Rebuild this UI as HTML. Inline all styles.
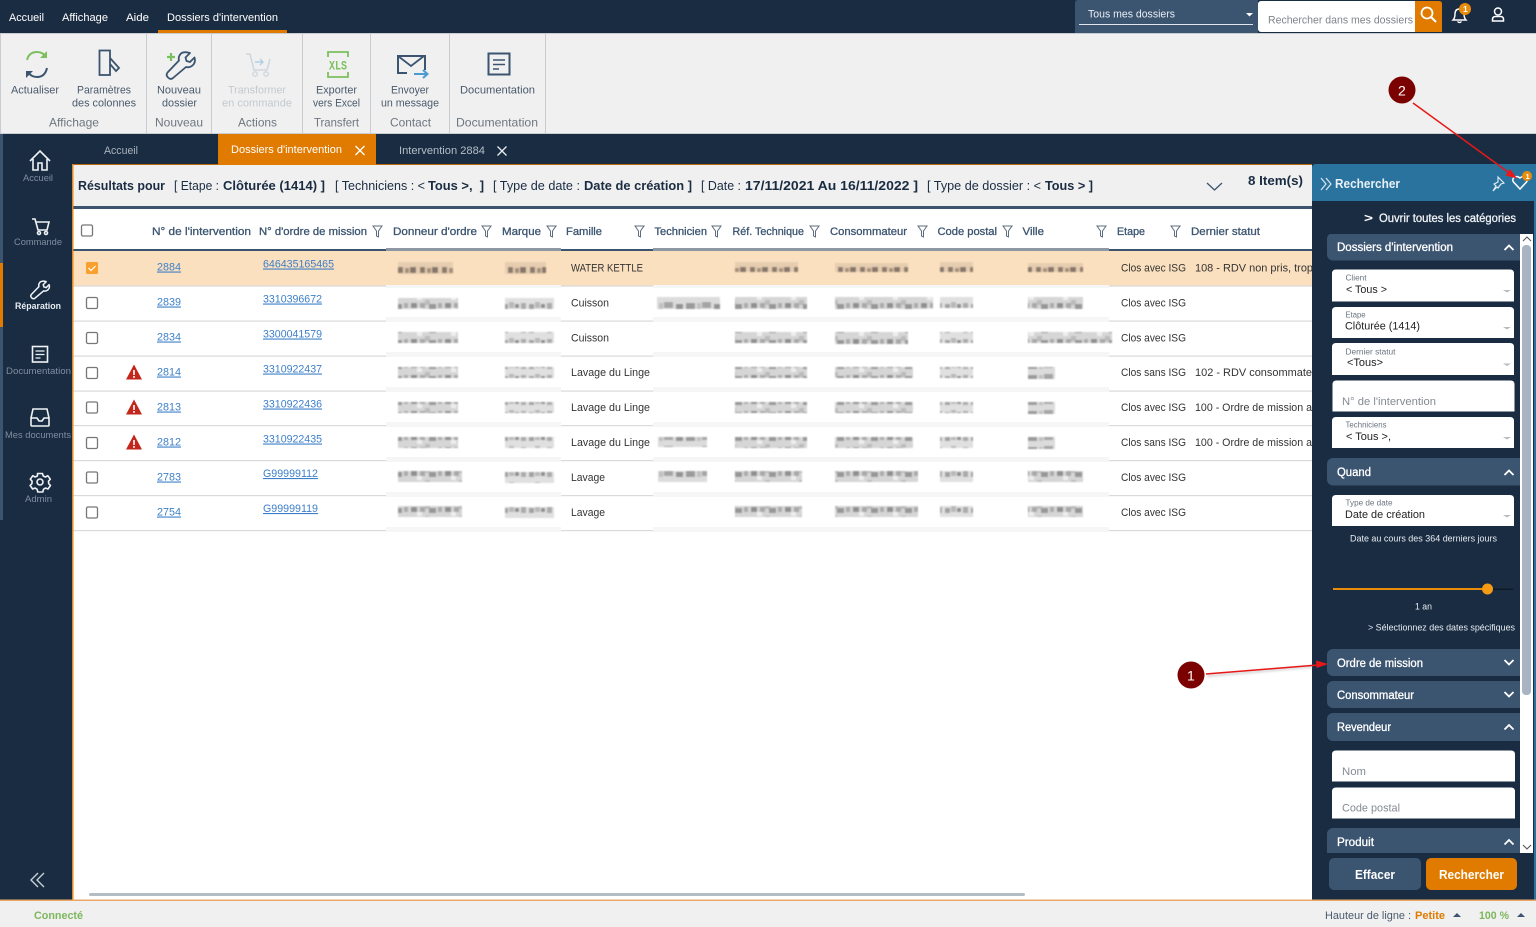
<!DOCTYPE html>
<html lang="fr"><head><meta charset="utf-8"><title>Dossiers d'intervention</title>
<style>
html,body{margin:0;padding:0;background:#fff;width:1536px;height:927px;overflow:hidden}
svg{display:block}
text{font-family:"Liberation Sans",sans-serif;font-size:11px;white-space:pre}
.w text,.w{fill:#fff}
.r text{font-size:11px;fill:#4a5a6c}
.g text{font-size:12px;fill:#6d7680}
.h text{font-size:11px;fill:#3b5470;stroke:#3b5470;stroke-width:.3px}
.s text{font-size:9.5px;fill:#7f8ea0}
.b{font-weight:bold}
.t text{font-size:12.5px;fill:#1a2c42}
.l text{fill:#3d7fc9;font-size:11px;text-decoration:underline}
.c text{fill:#333;font-size:11px}
.sec text{fill:#fff;font-size:11.5px;stroke:#fff;stroke-width:.3px}
.lab text{fill:#6a7480;font-size:8px}
.val text{fill:#222;font-size:11px}
.ph text{fill:#858b92;font-size:11px}
</style></head><body>
<svg width="1536" height="927" viewBox="0 0 1536 927" xmlns="http://www.w3.org/2000/svg">
<defs>
<filter id="bl" x="-5%" y="-20%" width="110%" height="140%"><feGaussianBlur stdDeviation="0.9"/></filter>
<filter id="sh" x="-10%" y="-50%" width="120%" height="250%"><feGaussianBlur stdDeviation="1.2"/></filter>
<pattern id="m1" width="34" height="12" patternUnits="userSpaceOnUse" x="3">
<rect width="34" height="12" fill="#d6d6d6"/><rect x="0" y="3" width="6" height="5" fill="#8f8f8f"/><rect x="9" y="3" width="5" height="5" fill="#a8a8a8"/><rect x="14" y="0" width="5" height="5" fill="#bbb"/><rect x="18" y="4" width="7" height="5" fill="#969696"/><rect x="27" y="3" width="4" height="5" fill="#aaa"/><rect x="6" y="8" width="5" height="4" fill="#eee"/>
</pattern>
<pattern id="m2" width="26" height="12" patternUnits="userSpaceOnUse" x="7">
<rect width="26" height="12" fill="#e0e0e0"/><rect x="2" y="4" width="5" height="5" fill="#a0a0a0"/><rect x="8" y="2" width="5" height="6" fill="#b8b8b8"/><rect x="14" y="4" width="4" height="4" fill="#8e8e8e"/><rect x="20" y="3" width="5" height="6" fill="#aaa"/>
</pattern>
<pattern id="m3" width="38" height="12" patternUnits="userSpaceOnUse" x="1">
<rect width="38" height="12" fill="#dcdcdc"/><rect x="1" y="3" width="9" height="6" fill="#9a9a9a"/><rect x="12" y="3" width="4" height="6" fill="#c0c0c0"/><rect x="17" y="2" width="9" height="6" fill="#a4a4a4"/><rect x="29" y="4" width="7" height="5" fill="#929292"/>
</pattern>
<pattern id="o1" width="22" height="12" patternUnits="userSpaceOnUse">
<rect width="22" height="12" fill="#e6cdb0"/><rect x="2" y="3" width="5" height="6" fill="#8b7a6a"/><rect x="9" y="4" width="4" height="5" fill="#a58f7a"/><rect x="14" y="3" width="6" height="6" fill="#86766a"/>
</pattern>
<clipPath id="tb"><rect x="73" y="209" width="1239" height="330"/></clipPath>
<clipPath id="pn"><rect x="1312" y="234" width="208" height="619"/></clipPath>
</defs>

<!-- base -->
<rect width="1536" height="927" fill="#fff"/>
<rect width="1536" height="33" fill="#1a2c42"/>
<rect y="33" width="1536" height="100" fill="#f0f0f0"/>
<rect y="133" width="1536" height="1" fill="#c9ccd0"/>
<rect y="33" width="1536" height="1" fill="#c9ccd0"/>
<rect y="134" width="1536" height="31" fill="#1a2c42"/>
<rect y="134" width="73" height="767" fill="#1a2c42"/>
<rect y="134" width="3" height="386" fill="#3b5470"/>
<rect y="263" width="3" height="64" fill="#e07b00"/>
<rect x="72" y="164" width="1240" height="1" fill="#e07b00" opacity=".8"/>
<rect x="72" y="164" width="1.5" height="737" fill="#e08a20"/>

<!-- top menu -->
<g class="w">
<text x="9" y="21" textLength="35" lengthAdjust="spacingAndGlyphs">Accueil</text>
<text x="62" y="21" textLength="46" lengthAdjust="spacingAndGlyphs">Affichage</text>
<text x="126" y="21" textLength="23" lengthAdjust="spacingAndGlyphs">Aide</text>
<text x="167" y="21" textLength="111" lengthAdjust="spacingAndGlyphs">Dossiers d'intervention</text>
</g>
<rect x="158" y="30" width="129" height="3" fill="#e07b00"/>

<!-- top right -->
<path d="M1075 33V3q0-3 3-3h180v33z" fill="#3b5470"/>
<text x="1088" y="17.500" textLength="87" lengthAdjust="spacingAndGlyphs" fill="#e8edf2">Tous mes dossiers</text>
<rect x="1079" y="24" width="174" height="1" fill="#dfe5ea"/>
<path d="M1246 13h7l-3.500 3.500z" fill="#fff"/>
<rect x="1258" y="1" width="160" height="31" rx="3" fill="#fff"/>
<text x="1268" y="23.500" textLength="145" lengthAdjust="spacingAndGlyphs" fill="#7f858c">Rechercher dans mes dossiers</text>
<path d="M1415 1h24q3 0 3 3v28h-27z" fill="#e07b00"/>
<circle cx="1427" cy="13" r="5.500" fill="none" stroke="#fff" stroke-width="1.800"/><path d="M1431 17l5 5" stroke="#fff" stroke-width="2"/>
<path d="M1453 20q2-2 2-6 0-5 4.500-5t4.500 5q0 4 2 6z" fill="none" stroke="#fff" stroke-width="1.400"/><path d="M1457.500 21.500q2 2 4 0" stroke="#fff" fill="none" stroke-width="1.300"/>
<circle cx="1465" cy="9" r="6" fill="#e98c0c"/><text x="1463" y="12" style="font-size:8.500px;font-weight:bold" fill="#fff">1</text>
<circle cx="1498" cy="11.500" r="3.500" fill="none" stroke="#fff" stroke-width="1.500"/><path d="M1492.500 21v-1.500q0-3 3-3h5q3 0 3 3v1.500z" fill="none" stroke="#fff" stroke-width="1.500"/>

<!-- ribbon separators -->
<g fill="#c9ccd0"><rect x="0" y="34" width="1" height="99"/><rect x="146" y="34" width="1" height="99"/><rect x="211" y="34" width="1" height="99"/><rect x="302" y="34" width="1" height="99"/><rect x="370" y="34" width="1" height="99"/><rect x="449" y="34" width="1" height="99"/><rect x="545" y="34" width="1" height="99"/></g>

<!-- ribbon icons -->
<path d="M27 60q2-8 10-8 6 0 9 5" fill="none" stroke="#7cc05d" stroke-width="2"/><path d="M47 51v7h-7z" fill="#7cc05d"/>
<path d="M47 68q-2 9-10 9-6 0-9-5" fill="none" stroke="#3b5470" stroke-width="2"/><path d="M26 78v-7h7z" fill="#3b5470"/>
<rect x="99.500" y="50.500" width="10.500" height="24.500" fill="none" stroke="#3b5470" stroke-width="1.800"/><path d="M110 58l9 10-3 3-6-7" fill="none" stroke="#3b5470" stroke-width="1.800"/>
<path d="M171 53v8m-4-4h8" stroke="#7cc05d" stroke-width="2.200" fill="none"/>
<path d="M190 53l-4.500 4.500 1 3.500 3.500 1 4.500-4.500q1.500 5-2 8-3 2.500-6.500 1.500L173 78q-2.500 2-5-.5t-.5-5L179 60.500q-1-3.500 1.500-6.500 3-3 9.500-1z" fill="none" stroke="#3b5470" stroke-width="1.800" stroke-linejoin="round"/>
<g opacity=".38"><path d="M246 54h4l4 16h13l3-11" fill="none" stroke="#9db0c0" stroke-width="1.600"/><circle cx="255" cy="74" r="2.200" fill="none" stroke="#9db0c0" stroke-width="1.400"/><circle cx="266" cy="74" r="2.200" fill="none" stroke="#9db0c0" stroke-width="1.400"/><path d="M255 62h8m-3-3l3 3-3 3" stroke="#4a9ad4" fill="none" stroke-width="1.400"/></g>
<path d="M328 57v-5h20v5M328 72v5h20v-5" fill="none" stroke="#7cc05d" stroke-width="1.800"/><text x="329" y="69.500" textLength="18" lengthAdjust="spacingAndGlyphs" style="font-family:'Liberation Mono',monospace;font-size:12.500px;font-weight:bold" fill="#7cc05d">XLS</text>
<path d="M407 73h-9V56h27v14" fill="none" stroke="#3b5470" stroke-width="2"/><path d="M398 56l13 10 13-10" fill="none" stroke="#3b5470" stroke-width="1.800"/><path d="M414 74h13m-4-4l4.500 4-4.500 4" fill="none" stroke="#4a9ad4" stroke-width="2"/>
<rect x="488.500" y="53.500" width="21" height="21" fill="none" stroke="#3b5470" stroke-width="2"/><path d="M493 60h12M493 64.500h12M493 69h6" stroke="#3b5470" stroke-width="1.600"/>

<!-- ribbon labels -->
<g class="r">
<text x="11" y="93.500" textLength="48" lengthAdjust="spacingAndGlyphs">Actualiser</text>
<text x="77" y="93.500" textLength="54" lengthAdjust="spacingAndGlyphs">Paramètres</text>
<text x="72" y="106.500" textLength="64" lengthAdjust="spacingAndGlyphs">des colonnes</text>
<text x="157" y="93.500" textLength="44" lengthAdjust="spacingAndGlyphs">Nouveau</text>
<text x="162" y="106.500" textLength="35" lengthAdjust="spacingAndGlyphs">dossier</text>
<text x="316" y="93.500" textLength="41" lengthAdjust="spacingAndGlyphs">Exporter</text>
<text x="313" y="106.500" textLength="47" lengthAdjust="spacingAndGlyphs">vers Excel</text>
<text x="391" y="93.500" textLength="38" lengthAdjust="spacingAndGlyphs">Envoyer</text>
<text x="381" y="106.500" textLength="58" lengthAdjust="spacingAndGlyphs">un message</text>
<text x="460" y="93.500" textLength="75" lengthAdjust="spacingAndGlyphs">Documentation</text>
</g>
<text x="228" y="93.500" textLength="58" lengthAdjust="spacingAndGlyphs" fill="#c4c9ce">Transformer</text>
<text x="222" y="106.500" textLength="70" lengthAdjust="spacingAndGlyphs" fill="#c4c9ce">en commande</text>
<g class="g">
<text x="49" y="126.500" textLength="50" lengthAdjust="spacingAndGlyphs">Affichage</text>
<text x="155" y="126.500" textLength="48" lengthAdjust="spacingAndGlyphs">Nouveau</text>
<text x="238" y="126.500" textLength="39" lengthAdjust="spacingAndGlyphs">Actions</text>
<text x="314" y="126.500" textLength="45" lengthAdjust="spacingAndGlyphs">Transfert</text>
<text x="390" y="126.500" textLength="41" lengthAdjust="spacingAndGlyphs">Contact</text>
<text x="456" y="126.500" textLength="82" lengthAdjust="spacingAndGlyphs">Documentation</text>
</g>

<!-- tabs -->
<text x="104" y="154" textLength="34" lengthAdjust="spacingAndGlyphs" fill="#a9b3be">Accueil</text>
<rect x="218" y="134" width="158" height="31" fill="#e07b00"/>
<text x="231" y="153" textLength="111" lengthAdjust="spacingAndGlyphs" fill="#fff">Dossiers d'intervention</text>
<path d="M355.500 146l9 9m0-9l-9 9" stroke="#fff" stroke-width="1.300"/>
<text x="399" y="154" textLength="86" lengthAdjust="spacingAndGlyphs" fill="#b5bec8">Intervention 2884</text>
<path d="M497.500 146.500l9 9m0-9l-9 9" stroke="#e8edf2" stroke-width="1.300"/>

<!-- sidebar icons -->
<g fill="none" stroke="#f0f3f6" stroke-width="1.600">
<path d="M30 161l10-10 10 10M33 159v11h5v-7h4v7h5v-11"/>
<path d="M32 219h3l3 11h9l2-8H36"/><circle cx="39" cy="233" r="1.500"/><circle cx="46" cy="233" r="1.500"/>
<path transform="translate(31 281) scale(.66) translate(-167 -52)" stroke-width="2.300" stroke-linejoin="round" d="M190 53l-4.500 4.500 1 3.500 3.500 1 4.500-4.500q1.500 5-2 8-3 2.500-6.500 1.500L173 78q-2.500 2-5-.5t-.5-5L179 60.500q-1-3.500 1.500-6.500 3-3 9.500-1z"/>
<rect x="32.500" y="346.500" width="15" height="15.500"/><path d="M35.500 351h9M35.500 354.500h9M35.500 358h5" stroke-width="1.300"/>
<path d="M31 418v7q0 1 1 1h16q1 0 1-1v-7l-2-9H33zM31 418h6l2 3h3l2-3h5"/>
<circle cx="40" cy="482" r="3"/><path d="M37.500 473.500h5l.7 2.500 2.300 1 2.300-1.300 2.500 3.500-1.800 2 .2 2.500 1.800 1.700-2.500 3.600-2.500-1-2 1.300-.7 2.700h-5l-.7-2.700-2-1.300-2.500 1-2.500-3.600 1.800-1.700.2-2.500-1.800-2 2.500-3.500 2.300 1.300 2.300-1z" stroke-linejoin="round"/>
</g>
<g class="s">
<text x="23" y="181" textLength="30" lengthAdjust="spacingAndGlyphs">Accueil</text>
<text x="14" y="245" textLength="48" lengthAdjust="spacingAndGlyphs">Commande</text>
<text x="6" y="374" textLength="65" lengthAdjust="spacingAndGlyphs">Documentation</text>
<text x="5" y="438" textLength="66" lengthAdjust="spacingAndGlyphs">Mes documents</text>
<text x="25" y="502" textLength="27" lengthAdjust="spacingAndGlyphs">Admin</text>
</g>
<text x="15" y="309" textLength="46" lengthAdjust="spacingAndGlyphs" fill="#e8edf2" style="font-size:9.500px;font-weight:bold">Réparation</text>
<path d="M44 873l-7 7 7 7M38 873l-7 7 7 7" fill="none" stroke="#c8d0d8" stroke-width="1.400"/>

<!-- results bar -->
<rect x="73.500" y="165" width="1239" height="41" fill="#f0f0f0"/>
<rect x="73.500" y="206" width="1239" height="3" fill="#3b5470"/>
<g class="t">
<text x="78" y="190" class="b" textLength="87" lengthAdjust="spacingAndGlyphs">Résultats pour</text>
<text x="174" y="190" textLength="45" lengthAdjust="spacingAndGlyphs">[ Etape :</text>
<text x="223" y="190" class="b" textLength="102" lengthAdjust="spacingAndGlyphs">Clôturée (1414) ]</text>
<text x="335" y="190" textLength="90" lengthAdjust="spacingAndGlyphs">[ Techniciens : &lt;</text>
<text x="428" y="190" class="b" textLength="56" lengthAdjust="spacingAndGlyphs">Tous &gt;,  ]</text>
<text x="493" y="190" textLength="87" lengthAdjust="spacingAndGlyphs">[ Type de date :</text>
<text x="584" y="190" class="b" textLength="108" lengthAdjust="spacingAndGlyphs">Date de création ]</text>
<text x="701" y="190" textLength="40" lengthAdjust="spacingAndGlyphs">[ Date :</text>
<text x="745" y="190" class="b" textLength="173" lengthAdjust="spacingAndGlyphs">17/11/2021 Au 16/11/2022 ]</text>
<text x="927" y="190" textLength="114" lengthAdjust="spacingAndGlyphs">[ Type de dossier : &lt;</text>
<text x="1045" y="190" class="b" textLength="48" lengthAdjust="spacingAndGlyphs">Tous &gt; ]</text>
<text x="1248" y="185" class="b" textLength="55" lengthAdjust="spacingAndGlyphs">8 Item(s)</text>
</g>
<path d="M1207 183l7.500 7 7.500-7" fill="none" stroke="#3b5470" stroke-width="1.300"/>

<!-- table header -->
<rect x="81.500" y="225" width="11" height="11" rx="1.500" fill="#fff" stroke="#777" stroke-width="1.300"/>
<g class="h">
<text x="152" y="235" textLength="99" lengthAdjust="spacingAndGlyphs">N° de l'intervention</text>
<text x="259" y="235" textLength="108" lengthAdjust="spacingAndGlyphs">N° d'ordre de mission</text>
<text x="393" y="235" textLength="84" lengthAdjust="spacingAndGlyphs">Donneur d'ordre</text>
<text x="502" y="235" textLength="39" lengthAdjust="spacingAndGlyphs">Marque</text>
<text x="566" y="235" textLength="36" lengthAdjust="spacingAndGlyphs">Famille</text>
<text x="654.500" y="235" textLength="52.500" lengthAdjust="spacingAndGlyphs">Technicien</text>
<text x="732.500" y="235" textLength="71.500" lengthAdjust="spacingAndGlyphs">Réf. Technique</text>
<text x="830" y="235" textLength="77" lengthAdjust="spacingAndGlyphs">Consommateur</text>
<text x="937.500" y="235" textLength="59.500" lengthAdjust="spacingAndGlyphs">Code postal</text>
<text x="1022.500" y="235" textLength="21.500" lengthAdjust="spacingAndGlyphs">Ville</text>
<text x="1117" y="235" textLength="28" lengthAdjust="spacingAndGlyphs">Etape</text>
<text x="1191" y="235" textLength="69" lengthAdjust="spacingAndGlyphs">Dernier statut</text>
</g>
<g fill="none" stroke="#5c6c7d" stroke-width="1">
<path d="M373 226h9l-3.500 5v6l-2-1v-5z"/>
<path d="M482 226h9l-3.500 5v6l-2-1v-5z"/><path d="M547 226h9l-3.500 5v6l-2-1v-5z"/><path d="M635 226h9l-3.500 5v6l-2-1v-5z"/><path d="M712 226h9l-3.500 5v6l-2-1v-5z"/><path d="M810 226h9l-3.500 5v6l-2-1v-5z"/><path d="M918 226h9l-3.500 5v6l-2-1v-5z"/><path d="M1003 226h9l-3.500 5v6l-2-1v-5z"/><path d="M1097 226h9l-3.500 5v6l-2-1v-5z"/><path d="M1171 226h9l-3.500 5v6l-2-1v-5z"/>
</g>
<rect x="73.500" y="249" width="1239" height="2" fill="#3b5470"/>
<rect x="386" y="248" width="175" height="4" fill="#8d98a4"/>
<rect x="653" y="248" width="456" height="4" fill="#8d98a4"/>

<!-- rows -->
<rect x="73.500" y="251" width="1239" height="34.500" fill="#fbe0bf"/>
<g fill="#d8dadd">
<rect x="73.500" y="285.500" width="1239" height="1.200"/><rect x="73.500" y="320.500" width="1239" height="1.200"/><rect x="73.500" y="355.500" width="1239" height="1.200"/><rect x="73.500" y="390.500" width="1239" height="1.200"/><rect x="73.500" y="425" width="1239" height="1.200"/><rect x="73.500" y="460" width="1239" height="1.200"/><rect x="73.500" y="495" width="1239" height="1.200"/><rect x="73.500" y="530" width="1239" height="1.200"/>
</g>
<!-- blur column washes -->
<g fill="#f6f6f6">
<rect x="386" y="317" width="175" height="5"/><rect x="653" y="317" width="456" height="5"/>
<rect x="386" y="352" width="175" height="5"/><rect x="653" y="352" width="456" height="5"/>
<rect x="386" y="387" width="175" height="5"/><rect x="653" y="387" width="456" height="5"/>
<rect x="386" y="422" width="175" height="5"/><rect x="653" y="422" width="456" height="5"/>
<rect x="386" y="457" width="175" height="5"/><rect x="653" y="457" width="456" height="5"/>
<rect x="386" y="492" width="175" height="5"/><rect x="653" y="492" width="456" height="5"/>
<rect x="386" y="527" width="175" height="5"/><rect x="653" y="527" width="456" height="5"/>
<rect x="386" y="285" width="175" height="3"/><rect x="653" y="285" width="456" height="3"/>
</g>
<!-- blurred cells -->
<g filter="url(#bl)">
<g fill="url(#o1)"><rect x="398" y="262" width="55" height="12"/><rect x="505" y="262" width="41" height="12"/><rect x="735" y="262" width="63" height="10"/><rect x="835" y="263" width="73" height="9"/><rect x="940" y="262" width="33" height="10"/><rect x="1028" y="263" width="55" height="9"/></g>
<g fill="url(#m1)">
<rect x="398" y="298" width="60" height="11"/><rect x="735" y="297" width="72" height="12"/><rect x="835" y="297" width="98" height="12"/><rect x="1028" y="297" width="55" height="12"/>
<rect x="398" y="332" width="60" height="11"/><rect x="735" y="332" width="72" height="11"/><rect x="835" y="332" width="73" height="12"/><rect x="1028" y="332" width="84" height="11"/>
<rect x="398" y="367" width="60" height="11"/><rect x="735" y="367" width="72" height="11"/><rect x="835" y="367" width="78" height="11"/>
<rect x="398" y="402" width="60" height="11"/><rect x="735" y="402" width="72" height="11"/><rect x="835" y="402" width="78" height="11"/>
<rect x="398" y="437" width="60" height="11"/><rect x="735" y="437" width="72" height="11"/><rect x="835" y="437" width="78" height="11"/>
<rect x="398" y="471" width="64" height="11"/><rect x="735" y="471" width="67" height="11"/><rect x="835" y="471" width="83" height="11"/><rect x="1028" y="471" width="55" height="11"/>
<rect x="398" y="506" width="64" height="11"/><rect x="735" y="506" width="67" height="11"/><rect x="835" y="506" width="83" height="11"/><rect x="1028" y="506" width="55" height="11"/>
</g>
<g fill="url(#m2)">
<rect x="505" y="298" width="49" height="11"/><rect x="505" y="332" width="49" height="11"/><rect x="505" y="367" width="49" height="11"/><rect x="505" y="402" width="49" height="11"/><rect x="505" y="437" width="49" height="11"/><rect x="505" y="472" width="49" height="11"/><rect x="505" y="507" width="49" height="11"/>
<rect x="940" y="297" width="33" height="11"/><rect x="940" y="332" width="33" height="11"/><rect x="940" y="367" width="33" height="11"/><rect x="940" y="402" width="33" height="11"/><rect x="940" y="437" width="33" height="11"/><rect x="940" y="471" width="33" height="11"/><rect x="940" y="506" width="33" height="11"/>
</g>
<g fill="url(#m3)">
<rect x="657" y="297" width="63" height="12"/><rect x="658" y="437" width="49" height="10"/><rect x="658" y="471" width="49" height="11"/>
<rect x="1028" y="367" width="27" height="12"/><rect x="1028" y="402" width="27" height="12"/><rect x="1028" y="437" width="27" height="12"/>
</g>
</g>

<!-- checkboxes -->
<rect x="86" y="262" width="12" height="12" rx="1.500" fill="#f9a12e"/><path d="M88.500 268l2.500 2.500 4.500-4.500" fill="none" stroke="#fff" stroke-width="1.200"/>
<g fill="#fff" stroke="#777" stroke-width="1.300">
<rect x="86.500" y="297.500" width="11" height="11" rx="1.500"/><rect x="86.500" y="332.500" width="11" height="11" rx="1.500"/><rect x="86.500" y="367.500" width="11" height="11" rx="1.500"/><rect x="86.500" y="402" width="11" height="11" rx="1.500"/><rect x="86.500" y="437.500" width="11" height="11" rx="1.500"/><rect x="86.500" y="472" width="11" height="11" rx="1.500"/><rect x="86.500" y="507" width="11" height="11" rx="1.500"/>
</g>
<!-- warnings -->
<g fill="#c3261a">
<path d="M134 364.500l8 15h-16z"/><path d="M134 399.500l8 15h-16z"/><path d="M134 434.500l8 15h-16z"/>
</g>
<g fill="#fff"><rect x="133.200" y="370" width="1.600" height="5"/><rect x="133.200" y="376" width="1.600" height="1.800"/><rect x="133.200" y="405" width="1.600" height="5"/><rect x="133.200" y="411" width="1.600" height="1.800"/><rect x="133.200" y="440" width="1.600" height="5"/><rect x="133.200" y="446" width="1.600" height="1.800"/></g>

<!-- links -->
<g class="l">
<text x="157" y="270.500" textLength="24" lengthAdjust="spacingAndGlyphs">2884</text>
<text x="157" y="305.500" textLength="24" lengthAdjust="spacingAndGlyphs">2839</text>
<text x="157" y="340.500" textLength="24" lengthAdjust="spacingAndGlyphs">2834</text>
<text x="157" y="375.500" textLength="24" lengthAdjust="spacingAndGlyphs">2814</text>
<text x="157" y="410.500" textLength="24" lengthAdjust="spacingAndGlyphs">2813</text>
<text x="157" y="445.500" textLength="24" lengthAdjust="spacingAndGlyphs">2812</text>
<text x="157" y="480.500" textLength="24" lengthAdjust="spacingAndGlyphs">2783</text>
<text x="157" y="515.500" textLength="24" lengthAdjust="spacingAndGlyphs">2754</text>
<text x="263" y="267.500" textLength="71" lengthAdjust="spacingAndGlyphs">646435165465</text>
<text x="263" y="302.500" textLength="59" lengthAdjust="spacingAndGlyphs">3310396672</text>
<text x="263" y="337.500" textLength="59" lengthAdjust="spacingAndGlyphs">3300041579</text>
<text x="263" y="372.500" textLength="59" lengthAdjust="spacingAndGlyphs">3310922437</text>
<text x="263" y="407.500" textLength="59" lengthAdjust="spacingAndGlyphs">3310922436</text>
<text x="263" y="442.500" textLength="59" lengthAdjust="spacingAndGlyphs">3310922435</text>
<text x="263" y="477" textLength="55" lengthAdjust="spacingAndGlyphs">G99999112</text>
<text x="263" y="512" textLength="55" lengthAdjust="spacingAndGlyphs">G99999119</text>
</g>
<g class="c">
<text x="571" y="271.500" textLength="72" lengthAdjust="spacingAndGlyphs">WATER KETTLE</text>
<text x="571" y="306.500" textLength="38" lengthAdjust="spacingAndGlyphs">Cuisson</text>
<text x="571" y="341.500" textLength="38" lengthAdjust="spacingAndGlyphs">Cuisson</text>
<text x="571" y="376" textLength="79" lengthAdjust="spacingAndGlyphs">Lavage du Linge</text>
<text x="571" y="411" textLength="79" lengthAdjust="spacingAndGlyphs">Lavage du Linge</text>
<text x="571" y="446" textLength="79" lengthAdjust="spacingAndGlyphs">Lavage du Linge</text>
<text x="571" y="481" textLength="34" lengthAdjust="spacingAndGlyphs">Lavage</text>
<text x="571" y="516" textLength="34" lengthAdjust="spacingAndGlyphs">Lavage</text>
<text x="1121" y="271.500" textLength="65" lengthAdjust="spacingAndGlyphs">Clos avec ISG</text>
<text x="1121" y="306.500" textLength="65" lengthAdjust="spacingAndGlyphs">Clos avec ISG</text>
<text x="1121" y="341.500" textLength="65" lengthAdjust="spacingAndGlyphs">Clos avec ISG</text>
<text x="1121" y="376" textLength="65" lengthAdjust="spacingAndGlyphs">Clos sans ISG</text>
<text x="1121" y="411" textLength="65" lengthAdjust="spacingAndGlyphs">Clos avec ISG</text>
<text x="1121" y="446" textLength="65" lengthAdjust="spacingAndGlyphs">Clos sans ISG</text>
<text x="1121" y="481" textLength="65" lengthAdjust="spacingAndGlyphs">Clos avec ISG</text>
<text x="1121" y="516" textLength="65" lengthAdjust="spacingAndGlyphs">Clos avec ISG</text>
<g clip-path="url(#tb)">
<text x="1195" y="271.500" textLength="118" lengthAdjust="spacingAndGlyphs">108 - RDV non pris, trop</text>
<text x="1195" y="376" textLength="117" lengthAdjust="spacingAndGlyphs">102 - RDV consommate</text>
<text x="1195" y="411" textLength="117" lengthAdjust="spacingAndGlyphs">100 - Ordre de mission a</text>
<text x="1195" y="446" textLength="117" lengthAdjust="spacingAndGlyphs">100 - Ordre de mission a</text>
</g>
</g>

<!-- horizontal scrollbar -->
<rect x="89" y="893" width="936" height="3" rx="1.500" fill="#b4bcc6"/>

<!-- right panel -->
<rect x="1312" y="165" width="224" height="736" fill="#1a2c42"/>
<path d="M1312 201v-33q0-4 4-4h220v37z" fill="#2a739f"/>
<rect x="1534" y="165" width="2" height="736" fill="#2a739f"/>
<path d="M1321 178l5 6-5 6M1326 178l5 6-5 6" fill="none" stroke="#dce6ee" stroke-width="1.200"/>
<text x="1335" y="188" textLength="65" lengthAdjust="spacingAndGlyphs" fill="#e8f0f6" style="font-size:12.500px;font-weight:bold">Rechercher</text>
<path d="M1498 177l6 6-3 1-3 4-1-1-4 4 3-5-2-2 4-2z" fill="none" stroke="#e8f0f6" stroke-width="1.100"/>
<path d="M1520 189l-6.500-7q-1.500-2 0-4 3-3 6.500 0 3-3 6.500 0 1.500 2 0 4z" fill="none" stroke="#fff" stroke-width="1.500"/>
<circle cx="1527" cy="176" r="5" fill="#e98c0c"/><text x="1525.500" y="179" style="font-size:7.500px;font-weight:bold" fill="#fff">1</text>
<text x="1364" y="222" textLength="9" lengthAdjust="spacingAndGlyphs" fill="#fff" style="font-weight:bold;font-size:12px">&gt;</text>
<text x="1379" y="222" textLength="137" lengthAdjust="spacingAndGlyphs" fill="#eef2f6" style="font-size:11.500px;stroke:#eef2f6;stroke-width:.3px">Ouvrir toutes les catégories</text>

<!-- scrollbar -->
<rect x="1520" y="234" width="13" height="619" fill="#fff"/>
<rect x="1522" y="245" width="9" height="450" rx="4" fill="#a9b4c2"/>
<path d="M1523 241l4-4 4 4M1523 845l4 4 4-4" fill="none" stroke="#555" stroke-width="1.100"/>

<!-- panel sections -->
<g clip-path="url(#pn)">
<g fill="#3b5470">
<rect x="1327" y="233" width="199" height="27.500" rx="6"/><rect x="1327" y="458" width="199" height="27.500" rx="6"/>
<rect x="1327" y="649" width="199" height="27" rx="6"/><rect x="1327" y="681" width="199" height="27" rx="6"/><rect x="1327" y="713" width="199" height="28" rx="6"/><rect x="1327" y="828" width="199" height="30" rx="6"/>
</g>
<g fill="none" stroke="#fff" stroke-width="1.800">
<path d="M1504.500 250l4.500-4.500 4.500 4.500"/><path d="M1504.500 475l4.500-4.500 4.500 4.500"/><path d="M1504.500 660l4.500 4.500 4.500-4.500"/><path d="M1504.500 692l4.500 4.500 4.500-4.500"/><path d="M1504.500 729.500l4.500-4.500 4.500 4.500"/><path d="M1504.500 844.500l4.500-4.500 4.500 4.500"/>
</g>
</g>
<g class="sec">
<text x="1337" y="251" textLength="116" lengthAdjust="spacingAndGlyphs">Dossiers d'intervention</text>
<text x="1337" y="476" textLength="34" lengthAdjust="spacingAndGlyphs">Quand</text>
<text x="1337" y="667" textLength="86" lengthAdjust="spacingAndGlyphs">Ordre de mission</text>
<text x="1337" y="699" textLength="77" lengthAdjust="spacingAndGlyphs">Consommateur</text>
<text x="1337" y="731" textLength="54" lengthAdjust="spacingAndGlyphs">Revendeur</text>
<text x="1337" y="846" textLength="37" lengthAdjust="spacingAndGlyphs">Produit</text>
</g>

<!-- fields -->
<g fill="#fff">
<path d="M1332 301.500v-28q0-4 4-4h174q4 0 4 4v28z"/>
<path d="M1332 338v-27q0-4 4-4h174q4 0 4 4v27z"/>
<path d="M1332 375v-28q0-4 4-4h174q4 0 4 4v28z"/>
<path d="M1332.500 411.500v-27q0-4 4-4h174q4 0 4 4v27z"/>
<path d="M1332 448v-27q0-4 4-4h174q4 0 4 4v27z"/>
<path d="M1332 526v-27q0-4 4-4h174q4 0 4 4v27z"/>
<path d="M1332 781.500v-27q0-4 4-4h175q4 0 4 4v27z"/>
<path d="M1332 818.500v-27q0-4 4-4h175q4 0 4 4v27z"/>
</g>
<g fill="#b6bcc3"><path d="M1503 290h8l-4 2.500z"/><path d="M1503 327h8l-4 2.500z"/><path d="M1503 363.500h8l-4 2.500z"/><path d="M1503 437h8l-4 2.500z"/><path d="M1503 515h8l-4 2.500z"/></g>
<g class="lab">
<text x="1345.500" y="280.500" textLength="21" lengthAdjust="spacingAndGlyphs">Client</text>
<text x="1345.500" y="317.500" textLength="20" lengthAdjust="spacingAndGlyphs">Etape</text>
<text x="1345.500" y="354.500" textLength="50" lengthAdjust="spacingAndGlyphs">Dernier statut</text>
<text x="1345.500" y="427.500" textLength="41" lengthAdjust="spacingAndGlyphs">Techniciens</text>
<text x="1345.500" y="505.500" textLength="47" lengthAdjust="spacingAndGlyphs">Type de date</text>
</g>
<g class="val">
<text x="1346" y="293" textLength="41" lengthAdjust="spacingAndGlyphs">&lt; Tous &gt;</text>
<text x="1345" y="329.500" textLength="75" lengthAdjust="spacingAndGlyphs">Clôturée (1414)</text>
<text x="1347" y="366" textLength="36" lengthAdjust="spacingAndGlyphs">&lt;Tous&gt;</text>
<text x="1346" y="440" textLength="45" lengthAdjust="spacingAndGlyphs">&lt; Tous &gt;,</text>
<text x="1345" y="518" textLength="80" lengthAdjust="spacingAndGlyphs">Date de création</text>
</g>
<g class="ph">
<text x="1342" y="405" textLength="94" lengthAdjust="spacingAndGlyphs">N° de l'intervention</text>
<text x="1342" y="775" textLength="24" lengthAdjust="spacingAndGlyphs">Nom</text>
<text x="1342" y="811.500" textLength="58" lengthAdjust="spacingAndGlyphs">Code postal</text>
</g>
<text x="1350" y="541.500" textLength="147" lengthAdjust="spacingAndGlyphs" fill="#e8edf2" style="font-size:9.500px">Date au cours des 364 derniers jours</text>
<rect x="1333" y="588" width="154" height="2" fill="#e98c0c"/><rect x="1487" y="588.500" width="26" height="1.500" fill="#0f1a28"/>
<circle cx="1487.500" cy="589" r="5.500" fill="#f59a13"/>
<text x="1415" y="609.500" textLength="17" lengthAdjust="spacingAndGlyphs" fill="#e8edf2" style="font-size:9.500px">1 an</text>
<text x="1368" y="630.500" textLength="147" lengthAdjust="spacingAndGlyphs" fill="#e8edf2" style="font-size:9.500px">&gt; Sélectionnez des dates spécifiques</text>

<!-- buttons -->
<rect x="1329" y="858" width="92" height="32" rx="5" fill="#3b5470"/>
<rect x="1426" y="858" width="91" height="32" rx="5" fill="#e07b00"/>
<text x="1355" y="879" textLength="40" lengthAdjust="spacingAndGlyphs" fill="#fff" style="font-size:12.500px;font-weight:bold">Effacer</text>
<text x="1439" y="879" textLength="65" lengthAdjust="spacingAndGlyphs" fill="#fff" style="font-size:12.500px;font-weight:bold">Rechercher</text>

<!-- status bar -->
<rect x="0" y="899.500" width="1536" height="1.500" fill="#e9a868"/>
<rect x="0" y="901" width="1536" height="26" fill="#f0f0f0"/>
<text x="34" y="919" textLength="49" lengthAdjust="spacingAndGlyphs" fill="#7cb75c" style="font-weight:bold">Connecté</text>
<text x="1325" y="919" textLength="86" lengthAdjust="spacingAndGlyphs" fill="#4a5a6c">Hauteur de ligne :</text>
<text x="1415" y="919" textLength="30" lengthAdjust="spacingAndGlyphs" fill="#e07b00" style="font-weight:bold">Petite</text>
<path d="M1453 917h8l-4-4z" fill="#3b5470"/>
<text x="1479" y="919" textLength="30" lengthAdjust="spacingAndGlyphs" fill="#7cb75c" style="font-weight:bold">100 %</text>
<path d="M1517 917h8l-4-4z" fill="#3b5470"/>

<!-- annotations -->
<path d="M1207 676L1312 666.500" stroke="#999" stroke-width="2" opacity=".5" filter="url(#sh)"/>
<path d="M1206 674L1318 665" stroke="#e81818" stroke-width="1.500"/>
<path d="M1328 664l-12-3.500.6 7.500z" fill="#e81818"/>
<path d="M1413 103L1508 172" stroke="#e81818" stroke-width="1.500"/>
<path d="M1517 178.500l-11.500-3 4.500-6.500z" fill="#e81818"/>
<circle cx="1402" cy="90" r="13.500" fill="#7b0000"/>
<text x="1398" y="95.500" fill="#fff" style="font-size:14px">2</text>
<circle cx="1191" cy="675" r="13.500" fill="#7b0000"/>
<text x="1187" y="680.500" fill="#fff" style="font-size:14px">1</text>
</svg>
</body></html>
